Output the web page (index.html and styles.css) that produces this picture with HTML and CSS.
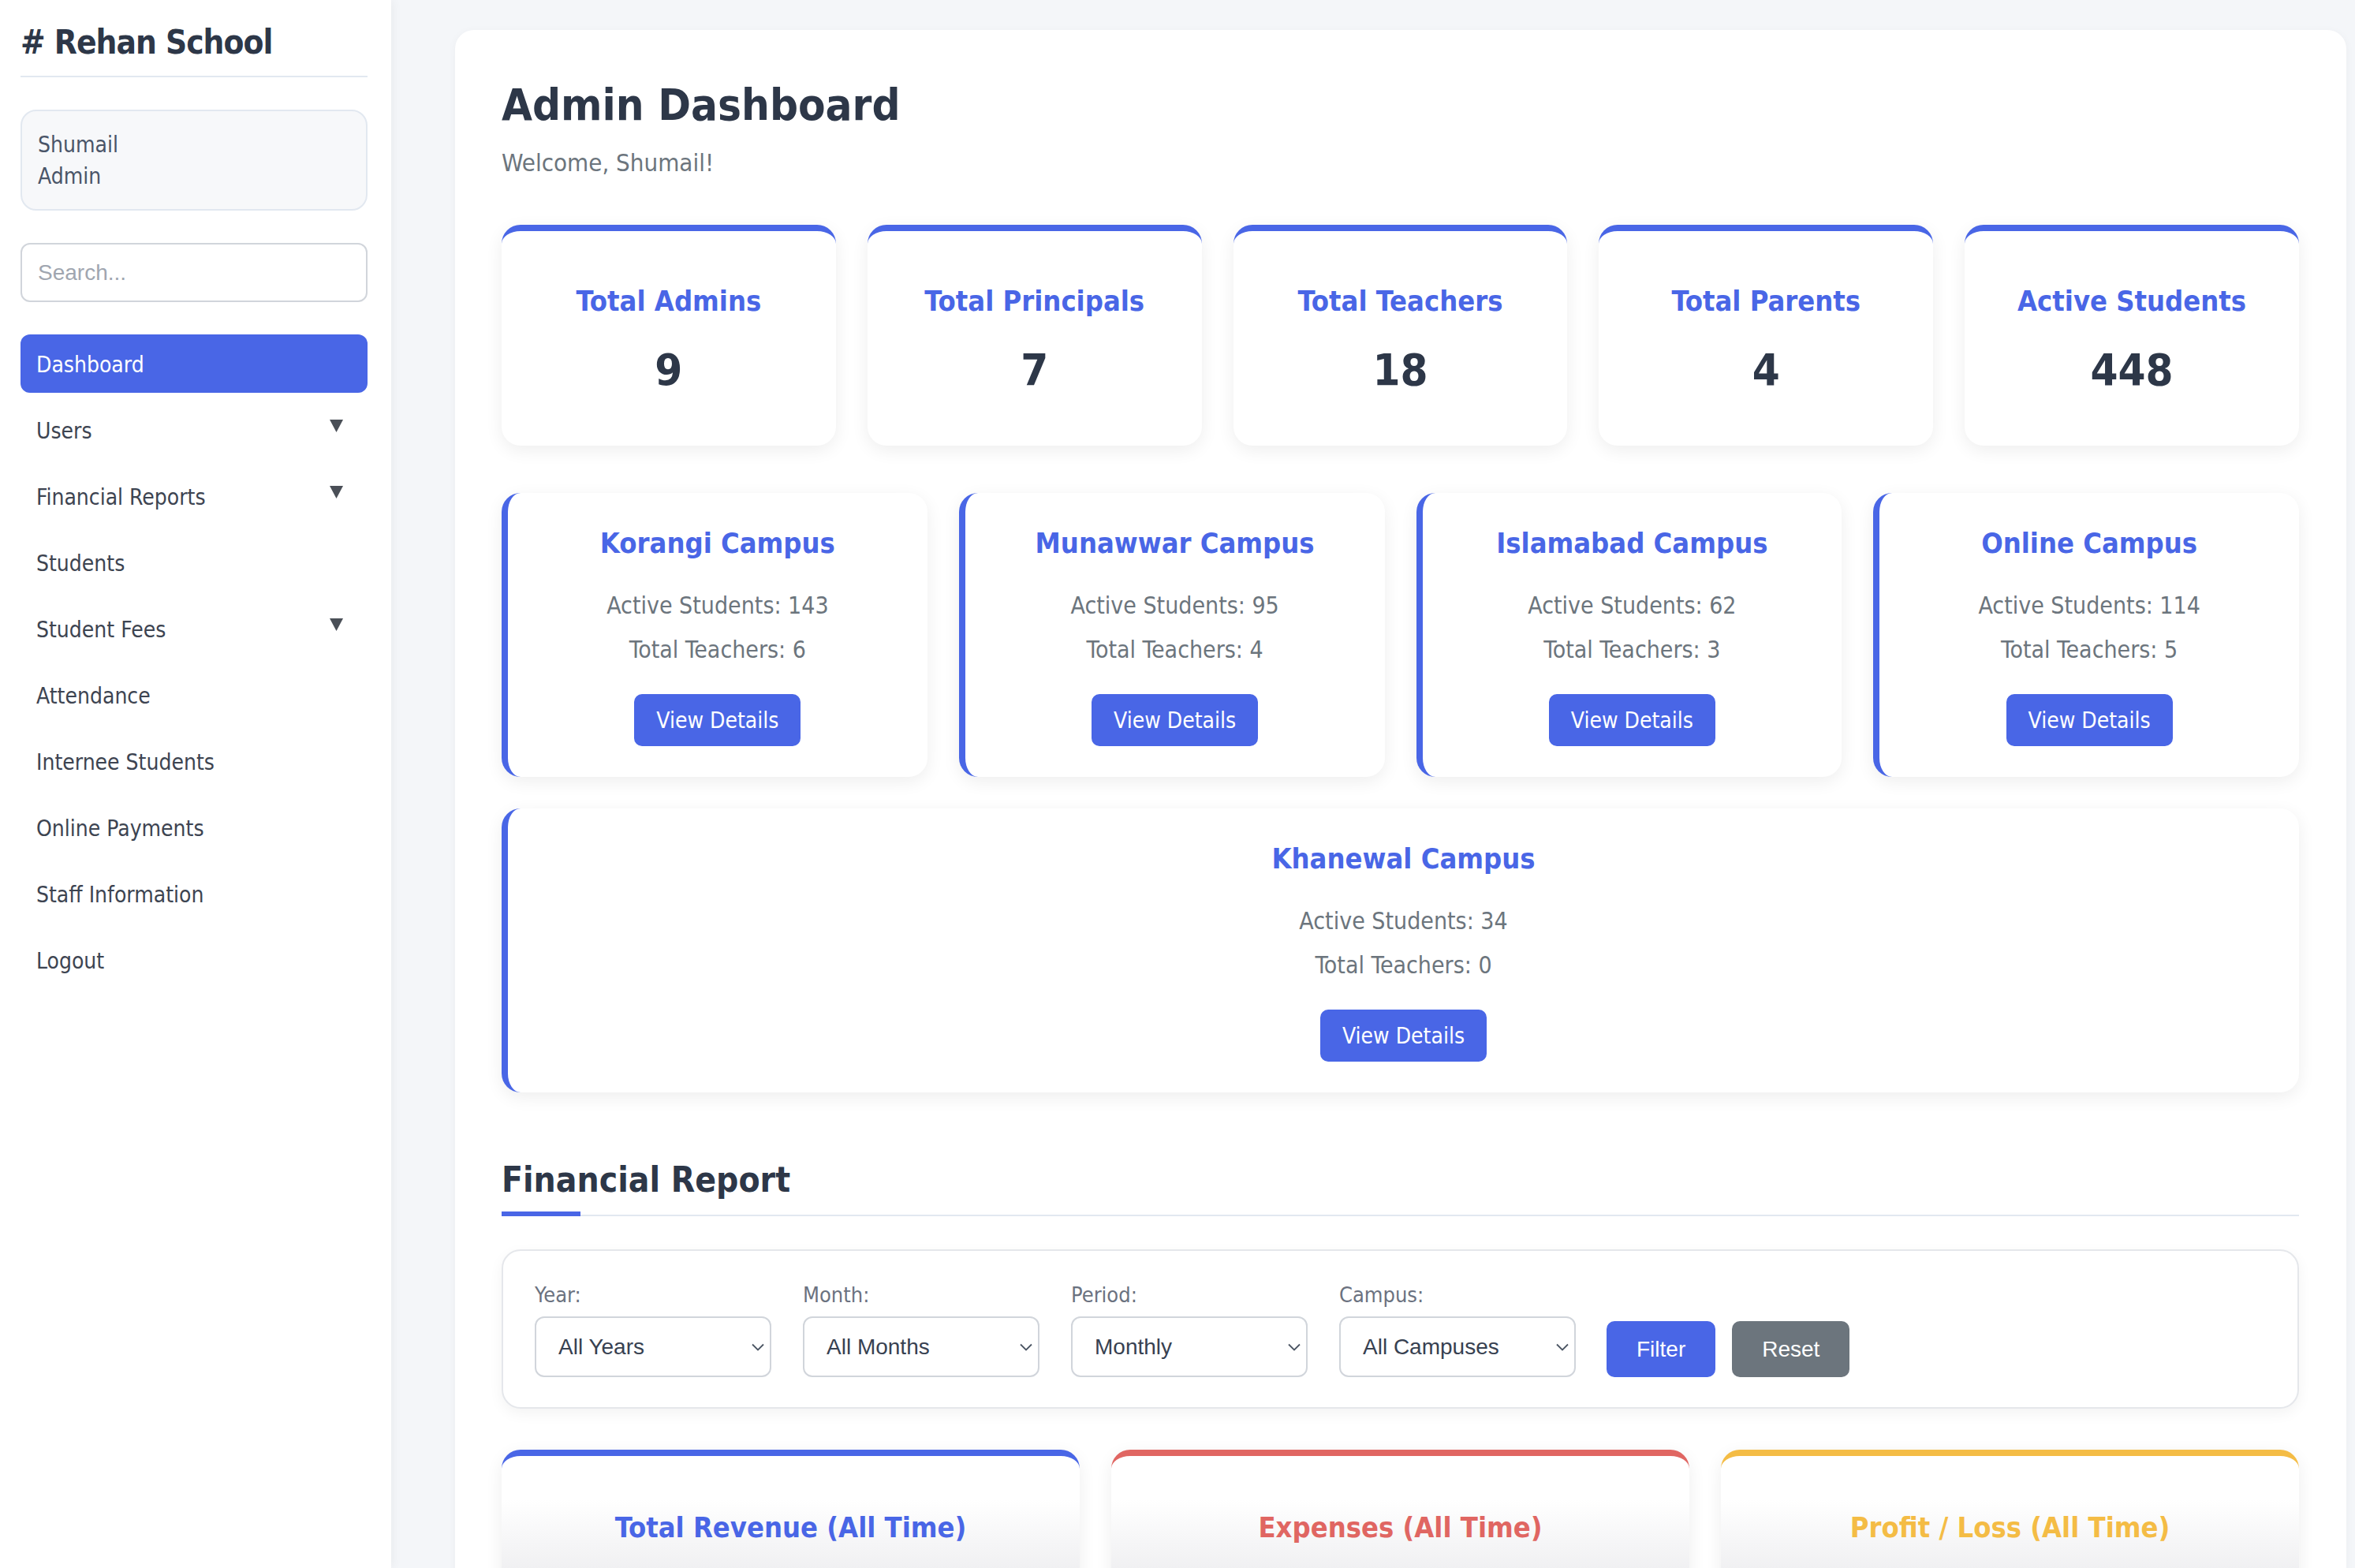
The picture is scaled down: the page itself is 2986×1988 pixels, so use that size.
FILE: index.html
```html
<!DOCTYPE html>
<html lang="en">
<head>
<meta charset="utf-8">
<title>Admin Dashboard - Rehan School</title>
<link rel="stylesheet" href="styles.css">
</head>
<body>
<div class="layout">
  <aside class="sidebar">
    <h2 class="brand"># Rehan School</h2>
    <div class="user-box">
      <div>Shumail</div>
      <div>Admin</div>
    </div>
    <input class="search" type="text" placeholder="Search...">
    <nav class="nav">
      <a class="nav-item active">Dashboard</a>
      <a class="nav-item">Users <svg class="caret" viewBox="0 0 17 16"><path d="M0 0H17L8.5 16Z"/></svg></a>
      <a class="nav-item">Financial Reports <svg class="caret" viewBox="0 0 17 16"><path d="M0 0H17L8.5 16Z"/></svg></a>
      <a class="nav-item">Students</a>
      <a class="nav-item">Student Fees <svg class="caret" viewBox="0 0 17 16"><path d="M0 0H17L8.5 16Z"/></svg></a>
      <a class="nav-item">Attendance</a>
      <a class="nav-item">Internee Students</a>
      <a class="nav-item">Online Payments</a>
      <a class="nav-item">Staff Information</a>
      <a class="nav-item">Logout</a>
    </nav>
  </aside>

  <main class="main">
    <section class="panel">
      <h1 class="page-title">Admin Dashboard</h1>
      <p class="welcome">Welcome, Shumail!</p>

      <div class="stats">
        <div class="stat-card"><h3>Total Admins</h3><div class="stat-num">9</div></div>
        <div class="stat-card"><h3>Total Principals</h3><div class="stat-num">7</div></div>
        <div class="stat-card"><h3>Total Teachers</h3><div class="stat-num">18</div></div>
        <div class="stat-card"><h3>Total Parents</h3><div class="stat-num">4</div></div>
        <div class="stat-card"><h3>Active Students</h3><div class="stat-num">448</div></div>
      </div>

      <div class="campuses">
        <div class="campus-card">
          <h3>Korangi Campus</h3>
          <p>Active Students: 143</p>
          <p>Total Teachers: 6</p>
          <a class="btn-view">View Details</a>
        </div>
        <div class="campus-card">
          <h3>Munawwar Campus</h3>
          <p>Active Students: 95</p>
          <p>Total Teachers: 4</p>
          <a class="btn-view">View Details</a>
        </div>
        <div class="campus-card">
          <h3>Islamabad Campus</h3>
          <p>Active Students: 62</p>
          <p>Total Teachers: 3</p>
          <a class="btn-view">View Details</a>
        </div>
        <div class="campus-card">
          <h3>Online Campus</h3>
          <p>Active Students: 114</p>
          <p>Total Teachers: 5</p>
          <a class="btn-view">View Details</a>
        </div>
        <div class="campus-card wide">
          <h3>Khanewal Campus</h3>
          <p>Active Students: 34</p>
          <p>Total Teachers: 0</p>
          <a class="btn-view">View Details</a>
        </div>
      </div>

      <h2 class="section-title">Financial Report</h2>

      <form class="filters">
        <div class="field">
          <label>Year:</label>
          <div class="select-wrap">
            <select><option>All Years</option></select>
            <svg class="chev" viewBox="0 0 16 10"><path d="M1 1.5L8 8.5L15 1.5"/></svg>
          </div>
        </div>
        <div class="field">
          <label>Month:</label>
          <div class="select-wrap">
            <select><option>All Months</option></select>
            <svg class="chev" viewBox="0 0 16 10"><path d="M1 1.5L8 8.5L15 1.5"/></svg>
          </div>
        </div>
        <div class="field">
          <label>Period:</label>
          <div class="select-wrap">
            <select><option>Monthly</option></select>
            <svg class="chev" viewBox="0 0 16 10"><path d="M1 1.5L8 8.5L15 1.5"/></svg>
          </div>
        </div>
        <div class="field">
          <label>Campus:</label>
          <div class="select-wrap">
            <select><option>All Campuses</option></select>
            <svg class="chev" viewBox="0 0 16 10"><path d="M1 1.5L8 8.5L15 1.5"/></svg>
          </div>
        </div>
        <div class="actions">
          <button type="button" class="btn btn-filter">Filter</button>
          <button type="button" class="btn btn-reset">Reset</button>
        </div>
      </form>

      <div class="fin-cards">
        <div class="fin-card revenue"><h3>Total Revenue (All Time)</h3></div>
        <div class="fin-card expenses"><h3>Expenses (All Time)</h3></div>
        <div class="fin-card profit"><h3>Profit / Loss (All Time)</h3></div>
      </div>
    </section>
  </main>
</div>
</body>
</html>
```

FILE: styles.css
```css
* { box-sizing: border-box; }

html, body {
  margin: 0;
  padding: 0;
  height: 100%;
  overflow: hidden;
}

body {
  font-family: "DejaVu Sans Condensed", "DejaVu Sans", sans-serif;
  font-stretch: condensed;
  background: #f4f6f9;
  color: #2d3748;
}

.layout {
  display: flex;
  height: 100vh;
  overflow: hidden;
}

/* ---------- Sidebar ---------- */
.sidebar {
  width: 496px;
  flex: 0 0 496px;
  background: #ffffff;
  padding: 29px 30px 0 26px;
  box-shadow: 2px 0 12px rgba(0, 0, 0, 0.05);
  position: relative;
  z-index: 1;
}

.brand {
  margin: 0;
  font-size: 42px;
  line-height: 49px;
  font-weight: 700;
  letter-spacing: -1px;
  color: #2d3748;
  padding-bottom: 18px;
  border-bottom: 2px solid #e2e8f0;
}

.user-box {
  margin-top: 41px;
  background: #f7f8fa;
  border: 2px solid #e2e8f0;
  border-radius: 20px;
  padding: 23px 20px 21px;
  font-size: 28px;
  line-height: 40px;
  color: #4a5568;
}

.search {
  display: block;
  width: 100%;
  margin-top: 41px;
  height: 75px;
  border: 2px solid #d1d5db;
  border-radius: 12px;
  padding: 0 20px;
  font-family: "Liberation Sans", Arial, sans-serif;
  font-size: 28px;
  color: #374151;
  background: #fff;
  outline: none;
}
.search::placeholder { color: #a0a6b0; }

.nav {
  margin-top: 41px;
  display: flex;
  flex-direction: column;
  gap: 10px;
}

.nav-item {
  height: 74px;
  display: flex;
  align-items: center;
  justify-content: space-between;
  padding: 2px 31px 0 20px;
  border-radius: 12px;
  font-size: 28px;
  color: #3d4451;
  text-decoration: none;
}

.nav-item.active {
  background: #4966e6;
  color: #ffffff;
}

.caret {
  width: 17px;
  height: 16px;
  fill: #4a4f57;
  margin-bottom: 12px;
}

/* ---------- Main ---------- */
.main {
  flex: 1;
  padding: 38px 11px 0 81px;
  min-width: 0;
}

.panel {
  background: #ffffff;
  border-radius: 24px;
  padding: 62px 60px 60px 59px;
  box-shadow: 0 2px 12px rgba(0, 0, 0, 0.04);
}

.page-title {
  margin: 0;
  font-size: 56px;
  line-height: 65px;
  font-weight: 700;
  color: #2d3748;
}

.welcome {
  margin: 23px 0 0;
  font-size: 31px;
  line-height: 36px;
  color: #6c757d;
}

/* stat cards */
.stats {
  margin-top: 61px;
  display: grid;
  grid-template-columns: repeat(5, 1fr);
  gap: 40px;
}

.stat-card {
  background: #fff;
  border-top: 8px solid #4966e6;
  border-radius: 24px;
  padding: 68px 20px 64px;
  text-align: center;
  box-shadow: 0 6px 22px rgba(0, 0, 0, 0.07);
}

.stat-card h3 {
  margin: 0;
  font-size: 36px;
  line-height: 42px;
  font-weight: 700;
  color: #4966e6;
}

.stat-num {
  margin-top: 33px;
  font-size: 56px;
  line-height: 65px;
  font-weight: 700;
  color: #2d3748;
}

/* campus cards */
.campuses {
  margin-top: 60px;
  display: grid;
  grid-template-columns: repeat(4, 1fr);
  gap: 40px;
}

.campus-card {
  background: #fff;
  border-left: 8px solid #4966e6;
  border-radius: 24px;
  padding: 43px 40px 39px;
  text-align: center;
  box-shadow: 0 6px 22px rgba(0, 0, 0, 0.07);
}

.campus-card.wide { grid-column: 1 / -1; }

.campus-card h3 {
  margin: 0 0 41px;
  font-size: 36px;
  line-height: 42px;
  font-weight: 700;
  color: #4966e6;
}

.campus-card p {
  margin: 0;
  font-size: 30px;
  line-height: 33px;
  color: #6c757d;
}

.campus-card p + p { margin-top: 23px; }

.btn-view {
  display: inline-flex;
  align-items: center;
  justify-content: center;
  margin-top: 40px;
  height: 66px;
  padding: 0 28px;
  background: #4966e6;
  color: #fff;
  border-radius: 10px;
  font-size: 28px;
  text-decoration: none;
}

/* section title */
.section-title {
  position: relative;
  margin: 85px 0 0;
  font-size: 44px;
  line-height: 51px;
  font-weight: 700;
  color: #2d3748;
  padding-bottom: 19px;
  border-bottom: 2px solid #e2e8f0;
}

.section-title::after {
  content: "";
  position: absolute;
  left: 0;
  bottom: -2px;
  width: 100px;
  height: 6px;
  background: #4966e6;
}

/* filters */
.filters {
  margin-top: 42px;
  display: flex;
  align-items: flex-end;
  gap: 40px;
  padding: 40px 40px 38px;
  border: 2px solid #e5e7eb;
  border-radius: 24px;
  background: #fff;
  box-shadow: 0 6px 18px rgba(0, 0, 0, 0.05);
}

.field label {
  display: block;
  font-size: 27px;
  line-height: 31px;
  color: #6b7280;
  margin-bottom: 12px;
}

.select-wrap {
  position: relative;
  width: 300px;
}

.select-wrap select {
  width: 100%;
  height: 77px;
  appearance: none;
  -webkit-appearance: none;
  background: #fff;
  border: 2px solid #d1d5db;
  border-radius: 12px;
  padding: 0 40px 0 28px;
  font-family: "Liberation Sans", Arial, sans-serif;
  font-size: 28px;
  color: #374151;
}

.chev {
  position: absolute;
  right: 9px;
  top: 34px;
  width: 16px;
  height: 10px;
  fill: none;
  stroke: #4b5563;
  stroke-width: 1.8;
  pointer-events: none;
}

.actions {
  display: flex;
  gap: 21px;
  margin-left: -1px;
}

.btn {
  height: 71px;
  padding: 0 38px;
  border: none;
  border-radius: 10px;
  font-family: "Liberation Sans", Arial, sans-serif;
  font-size: 28px;
  color: #fff;
}

.btn-filter { background: #4966e6; }
.btn-reset { background: #6c757d; }

/* financial cards */
.fin-cards {
  margin-top: 52px;
  display: grid;
  grid-template-columns: repeat(3, 1fr);
  gap: 40px;
}

.fin-card {
  min-height: 320px;
  border-top: 8px solid #4966e6;
  border-radius: 24px;
  padding: 70px 20px 40px;
  text-align: center;
  background: linear-gradient(180deg, #ffffff 0px, #ffffff 55px, #efeff1 150px, #e9e9ec 300px);
  box-shadow: 0 6px 22px rgba(0, 0, 0, 0.07);
}

.fin-card h3 {
  margin: 0;
  font-size: 36px;
  line-height: 42px;
  font-weight: 700;
}

.fin-card.revenue { border-top-color: #4966e6; }
.fin-card.revenue h3 { color: #4966e6; }
.fin-card.expenses { border-top-color: #e06662; }
.fin-card.expenses h3 { color: #e06662; }
.fin-card.profit { border-top-color: #f4bc45; }
.fin-card.profit h3 { color: #f4bc45; }
```
